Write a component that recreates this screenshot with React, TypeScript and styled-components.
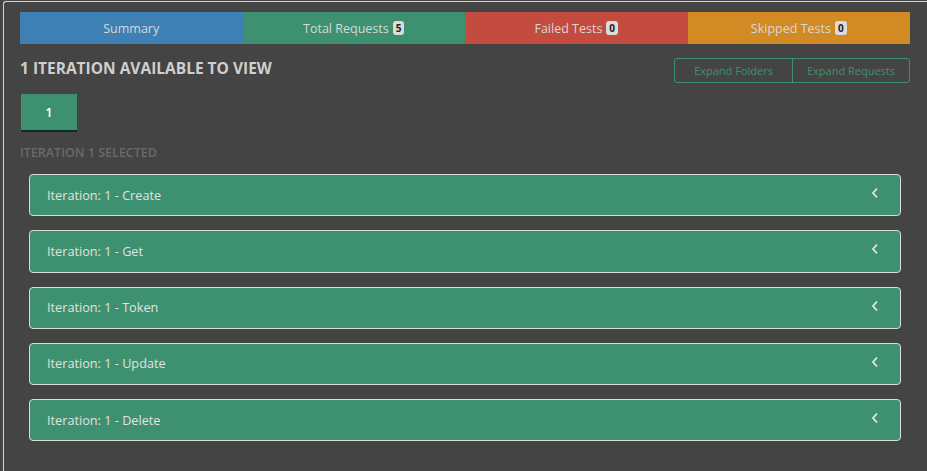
import React from "react";
import styled, { createGlobalStyle } from "styled-components";

const Global = createGlobalStyle`
  html, body { margin: 0; padding: 0; background: #444444; overflow: hidden; }
  body { font-family: "Open Sans", "Noto Sans", sans-serif; }
`;

const Page = styled.div`
  height: 471px;
  box-sizing: border-box;
  padding: 1px 0 0 3px;
`;

const Card = styled.div`
  height: 100%;
  box-sizing: border-box;
  border-top: 1px solid #d4d4d4;
  border-left: 1px solid #d4d4d4;
  border-top-left-radius: 3px;
  padding: 10px 17px 0 16px;
  display: flex;
  flex-direction: column;
`;

const Tabs = styled.div`
  display: grid;
  grid-template-columns: repeat(4, 1fr);
  height: 32px;
`;

const Tab = styled.div<{ $bg: string }>`
  background: ${(p) => p.$bg};
  color: #d8d8d8;
  font-size: 12.5px;
  display: flex;
  align-items: center;
  justify-content: center;
  gap: 4px;
`;

const Badge = styled.span`
  background: #dcdcdc;
  color: #222;
  font-size: 10px;
  font-weight: 700;
  border-radius: 3px;
  padding: 1px 3px;
  line-height: 12px;
`;

const HeaderRow = styled.div`
  display: flex;
  justify-content: space-between;
  align-items: flex-start;
  margin-top: 14px;
`;

const Title = styled.h2`
  margin: -1px 0 0 0;
  font-size: 15.5px;
  font-weight: 700;
  color: #cfcfcf;
`;

const BtnGroup = styled.div`
  display: flex;
  border: 1px solid #3d9170;
  border-radius: 3px;
  height: 25px;
  box-sizing: border-box;
`;

const GroupBtn = styled.button`
  background: transparent;
  border: none;
  color: #3d9170;
  font-family: inherit;
  font-size: 11px;
  padding: 0 19px;
  & + & { border-left: 1px solid #3d9170; padding: 0 14px; }
`;

const IterBtn = styled.button`
  margin-top: 11px;
  margin-left: 1px;
  width: 56px;
  height: 38px;
  background: #3d9170;
  border: none;
  border-bottom: 2px solid #0e2a30;
  color: #fff;
  font-family: inherit;
  font-size: 13px;
  font-weight: 600;
`;

const Selected = styled.div`
  margin-top: 12px;
  font-size: 12.5px;
  font-weight: 600;
  color: #6a6a6a;
`;

const List = styled.div`
  margin: 13px 9px 0 9px;
  display: flex;
  flex-direction: column;
  gap: 14px;
`;

const Item = styled.div`
  height: 42.25px;
  box-sizing: border-box;
  background: #3d9170;
  border: 1px solid #dcdcdc;
  border-radius: 4px;
  display: flex;
  align-items: center;
  justify-content: space-between;
  padding: 0 21px 1px 17px;
  color: #e2e2e2;
  font-size: 12.7px;
`;

const Chevron = styled.svg`
  width: 8px;
  height: 12px;
  margin-bottom: 3px;
`;

const items = ["Create", "Get", "Token", "Update", "Delete"];

export default function App() {
  return (
    <>
      <Global />
      <Page>
        <Card>
          <Tabs>
            <Tab $bg="#3e80b4">Summary</Tab>
            <Tab $bg="#3d9170">
              Total Requests <Badge>5</Badge>
            </Tab>
            <Tab $bg="#c44b40">
              Failed Tests <Badge>0</Badge>
            </Tab>
            <Tab $bg="#d28a24">
              Skipped Tests <Badge>0</Badge>
            </Tab>
          </Tabs>
          <HeaderRow>
            <Title>1 ITERATION AVAILABLE TO VIEW</Title>
            <BtnGroup>
              <GroupBtn>Expand Folders</GroupBtn>
              <GroupBtn>Expand Requests</GroupBtn>
            </BtnGroup>
          </HeaderRow>
          <div>
            <IterBtn>1</IterBtn>
          </div>
          <Selected>ITERATION 1 SELECTED</Selected>
          <List>
            {items.map((n) => (
              <Item key={n}>
                <span>Iteration: 1 - {n}</span>
                <Chevron viewBox="0 0 8 12">
                  <path d="M6 1.5 L2 6 L6 10.5" fill="none" stroke="#e6e6e6" strokeWidth="1.8" />
                </Chevron>
              </Item>
            ))}
          </List>
        </Card>
      </Page>
    </>
  );
}
